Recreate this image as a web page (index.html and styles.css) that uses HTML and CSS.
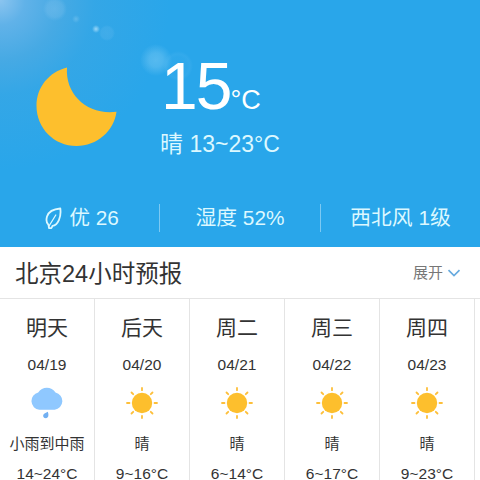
FILE: index.html
```
<!DOCTYPE html>
<html lang="zh-CN">
<head>
<meta charset="utf-8">
<title>北京天气</title>
<link rel="stylesheet" href="styles.css">
</head>
<body>
<main class="weather">
  <section class="hero">
    <div class="current">
      <svg class="moon" width="82" height="80" viewBox="0 0 82 80"><path d="M31 .5C13 5 .5 20 .5 39C.5 61 18 79 40.500 79C61 79 78 64 80.500 44.800C52 48.500 29 28 31 .5Z" fill="#fdbf2d"/></svg>
      <div class="reading">
        <div class="temp">15<span class="unit">°C</span></div>
        <div class="range">晴 13~23°C</div>
      </div>
    </div>
    <div class="stats">
      <div class="stat air"><svg class="leaf" width="18" height="24" viewBox="0 0 18 24" fill="none" stroke="#dcf8ff" stroke-linecap="round" stroke-linejoin="round"><path d="M15.300 1.500C9 2 3.500 5 2 9.500C1 13 1.500 16 3.500 17.800L4 21.200L6.500 21L7.500 18.800C13 18 16.500 10 15.300 1.500Z" stroke-width="1.800"/><path d="M10.800 8L6.800 14.500L4 19" stroke-width="1.300"/></svg><span>优 26</span></div>
      <div class="stat humidity">湿度 52%</div>
      <div class="stat wind">西北风 1级</div>
    </div>
  </section>
  <header class="bar">
    <h1>北京24小时预报</h1>
    <div class="expand">展开<svg width="14" height="8" viewBox="0 0 14 8"><path d="M1.500 1.200L7 6.500L12.500 1.200" fill="none" stroke="#67aadf" stroke-width="1.700"/></svg></div>
  </header>
  <svg width="0" height="0" class="defs">
    <symbol id="sun" viewBox="0 0 34 34"><circle cx="17" cy="17" r="10.200" fill="#fdbf2d"/><path d="M17 2V4.200M17 29.800V32M2 17H4.500M29.500 17H32M6.500 6.500L8.200 8.200M25.800 25.800L27.500 27.500M27.500 6.500L25.800 8.200M8.200 25.800L6.500 27.500" stroke="#fdbf3a" stroke-width="1.800" stroke-linecap="round"/></symbol>
    <symbol id="rain" viewBox="0 0 34 34"><path d="M9.300 23.800A8.800 8.800 0 0 1 8.200 6.500A10.300 10.300 0 0 1 25.500 6.500A8.800 8.800 0 0 1 24.700 23.800Z" fill="#8fc8ff"/><path d="M17.800 25.800C19 29 18.500 32.200 15.800 32.200C13 32.200 12.200 29 14.500 27.500Z" fill="#72b0f2"/></symbol>
  </svg>
  <section class="forecast">
    <article class="day"><h2>明天</h2><time>04/19</time><svg class="icon"><use href="#rain"/></svg><p class="condition">小雨到中雨</p><p class="degrees">14~24°C</p></article>
    <article class="day"><h2>后天</h2><time>04/20</time><svg class="icon"><use href="#sun"/></svg><p class="condition">晴</p><p class="degrees">9~16°C</p></article>
    <article class="day"><h2>周二</h2><time>04/21</time><svg class="icon"><use href="#sun"/></svg><p class="condition">晴</p><p class="degrees">6~14°C</p></article>
    <article class="day"><h2>周三</h2><time>04/22</time><svg class="icon"><use href="#sun"/></svg><p class="condition">晴</p><p class="degrees">6~17°C</p></article>
    <article class="day"><h2>周四</h2><time>04/23</time><svg class="icon"><use href="#sun"/></svg><p class="condition">晴</p><p class="degrees">9~23°C</p></article>
  </section>
</main>
</body>
</html>
```

FILE: styles.css
```
* { box-sizing: border-box; margin: 0; padding: 0; }
body {
  width: 480px;
  height: 480px;
  overflow: hidden;
  background: #fff;
  color: #333;
  font-family: "Liberation Sans", "Noto Sans CJK SC", sans-serif;
}
.weather { height: 480px; overflow: hidden; }
.hero {
  height: 247px;
  background:
    radial-gradient(circle at 156px 60px, rgba(130, 205, 245, .5) 0, rgba(130, 205, 245, .4) 7px, transparent 16px),
    radial-gradient(circle at 178px 66px, rgba(110, 195, 245, .08) 9px, rgba(110, 195, 245, .14) 12px, transparent 15px),
    radial-gradient(circle at 96px 29px, rgba(165, 220, 250, .9) 0, transparent 4px),
    radial-gradient(circle at 76px 19px, rgba(130, 200, 240, .5) 0, transparent 4px),
    radial-gradient(circle at 107px 33px, rgba(110, 190, 240, .25) 0, rgba(110, 190, 240, .2) 6px, transparent 8px),
    radial-gradient(circle at 55px 9px, rgba(140, 200, 240, .35) 0, rgba(140, 200, 240, .25) 8px, transparent 12px),
    radial-gradient(circle at 0 0, rgba(150, 200, 240, .9) 0, rgba(115, 182, 232, .75) 25px, rgba(90, 172, 224, .6) 60px, rgba(65, 167, 226, .45) 95px, transparent 170px),
    #29a6ea;
}
.current { display: flex; height: 192px; }
.moon { margin: 67px 0 0 36px; flex: none; }
.reading { margin: 52px 0 0 42px; }
.temp { height: 68px; padding-left: 1px; line-height: 68px; font-size: 66px; color: #fff; white-space: nowrap; letter-spacing: -2px; }
.unit { font-size: 27px; letter-spacing: 0; }
.range { height: 32px; margin-top: 8px; line-height: 32px; font-size: 23px; color: #dcf8ff; white-space: nowrap; }
.stats { display: grid; grid-template-columns: 160px 161px 159px; height: 28px; margin-top: 12px; color: #dcf8ff; }
.stat { display: flex; align-items: center; justify-content: center; line-height: 28px; font-size: 20.800px; white-space: nowrap; }
.air, .humidity { border-right: 1px solid #7cc9f3; }
.air { gap: 6px; padding-left: 5px; }
.leaf { flex: none; margin-top: 2px; }
.bar { display: flex; align-items: center; justify-content: space-between; height: 52px; padding: 1px 19px 0 15px; border-bottom: 1px solid #e4e4e4; }
.bar h1 { padding-top: 1px; font-size: 23.500px; font-weight: 400; line-height: 32px; }
.expand { display: flex; align-items: center; gap: 4px; font-size: 15px; line-height: 20px; color: #777; }
.defs { position: absolute; }
.forecast { display: grid; grid-template-columns: repeat(5, 95px) 1fr; height: 181px; }
.day { display: flex; flex-direction: column; align-items: center; border-right: 1px solid #e4e4e4; }
.day h2 { height: 30px; margin-top: 14px; font-size: 21px; font-weight: 400; line-height: 30px; }
.day time { margin-top: 12px; font-size: 15.500px; line-height: 20px; }
.icon { display: block; width: 34px; height: 34px; margin-top: 11px; flex: none; }
.condition { height: 24px; margin-top: 12px; font-size: 15px; line-height: 24px; white-space: nowrap; }
.degrees { margin-top: 12px; font-size: 15.500px; line-height: 12px; }
```
